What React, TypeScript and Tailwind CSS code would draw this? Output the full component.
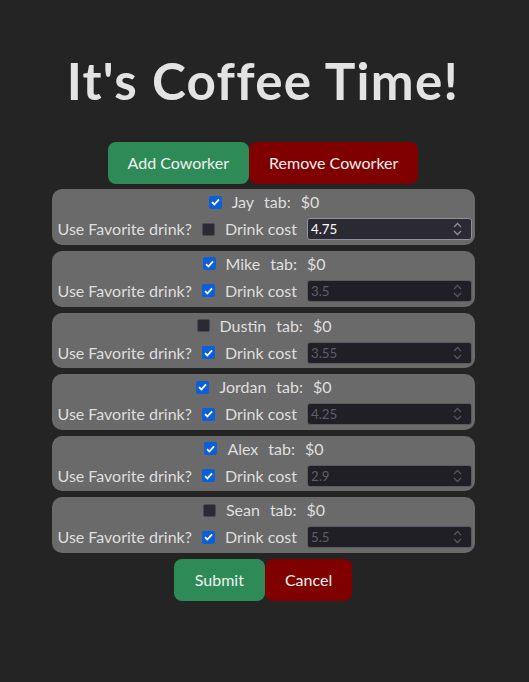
import React from "react";

type Coworker = {
  name: string;
  active: boolean;
  favorite: boolean;
  cost: string;
};

const coworkers: Coworker[] = [
  { name: "Jay", active: true, favorite: false, cost: "4.75" },
  { name: "Mike", active: true, favorite: true, cost: "3.5" },
  { name: "Dustin", active: false, favorite: true, cost: "3.55" },
  { name: "Jordan", active: true, favorite: true, cost: "4.25" },
  { name: "Alex", active: true, favorite: true, cost: "2.9" },
  { name: "Sean", active: false, favorite: true, cost: "5.5" },
];

const Check: React.FC<{ checked: boolean }> = ({ checked }) =>
  checked ? (
    <span className="w-[13px] h-[13px] rounded-[2px] bg-[#0b5fd8] flex items-center justify-center shrink-0">
      <svg width="9" height="8" viewBox="0 0 9 8">
        <path d="M1 4.2 L3.4 6.5 L8 1.4" stroke="white" strokeWidth="1.8" fill="none" />
      </svg>
    </span>
  ) : (
    <span className="w-[13px] h-[13px] rounded-[2px] bg-[#2b2a33] border border-[#4a4a55] shrink-0" />
  );

const CostInput: React.FC<{ value: string; disabled: boolean }> = ({ value, disabled }) => (
  <div
    className={
      disabled
        ? "w-[165px] shrink-0 h-[22px] bg-[#201f26] border border-[#5a5a63] rounded-[3px] flex items-center justify-between pl-[3px] pr-[9px] text-[13.33px] text-[#5e5e66]"
        : "w-[165px] shrink-0 h-[22px] bg-[#2b2a33] border border-[#8f8f9d] rounded-[3px] flex items-center justify-between pl-[3px] pr-[9px] text-[13.33px] text-white"
    }
  >
    <span>{value}</span>
    <svg width="9" height="14" viewBox="0 0 9 14">
      <path d="M1 5 L4.5 1.5 L8 5" stroke={disabled ? "#55555e" : "#8f8f9d"} strokeWidth="1.3" fill="none" />
      <path d="M1 9 L4.5 12.5 L8 9" stroke={disabled ? "#55555e" : "#8f8f9d"} strokeWidth="1.3" fill="none" />
    </svg>
  </div>
);

const App: React.FC = () => {
  return (
    <div
      className="min-h-screen bg-[#242424] text-[#dedede] flex flex-col items-center leading-6 whitespace-nowrap pr-[3px]"
      style={{ fontFamily: '"Segoe UI", Lato, sans-serif' }}
    >
      <h1 className="mt-[52px] text-[51.2px] leading-[1.1] font-bold tracking-[1.3px] text-[#e3e3e3]">
        It's Coffee Time!
      </h1>
      <div className="flex mt-[34px]">
        <button className="h-[42px] px-[20px] bg-[#2e8b57] rounded-lg text-base text-[#f0f0f0]">
          Add Coworker
        </button>
        <button className="h-[42px] px-[20px] bg-[#800000] rounded-lg text-base text-[#f0f0f0]">
          Remove Coworker
        </button>
      </div>
      <ul className="mt-[5px] w-[423px] flex flex-col gap-[6px]">
        {coworkers.map((c) => (
          <li key={c.name} className="h-[55.6px] bg-[#6a6a6a] rounded-[10px] flex flex-col items-center pl-[6px] pr-[4px]">
            <div className="h-[24px] mt-[1px] flex items-center gap-[10px]">
              <Check checked={c.active} />
              <span>{c.name}</span>
              <span>tab:</span>
              <span>$0</span>
            </div>
            <div className="h-[30px] w-full flex items-center gap-[10px]">
              <span>Use Favorite drink?</span>
              <Check checked={c.favorite} />
              <span>Drink cost</span>
              <CostInput value={c.cost} disabled={c.favorite} />
            </div>
          </li>
        ))}
      </ul>
      <div className="flex mt-[6px]">
        <button className="h-[42px] px-[21px] bg-[#2e8b57] rounded-lg text-base text-[#f0f0f0]">
          Submit
        </button>
        <button className="h-[42px] px-[20px] bg-[#800000] rounded-lg text-base text-[#f0f0f0]">
          Cancel
        </button>
      </div>
    </div>
  );
};

export default App;
